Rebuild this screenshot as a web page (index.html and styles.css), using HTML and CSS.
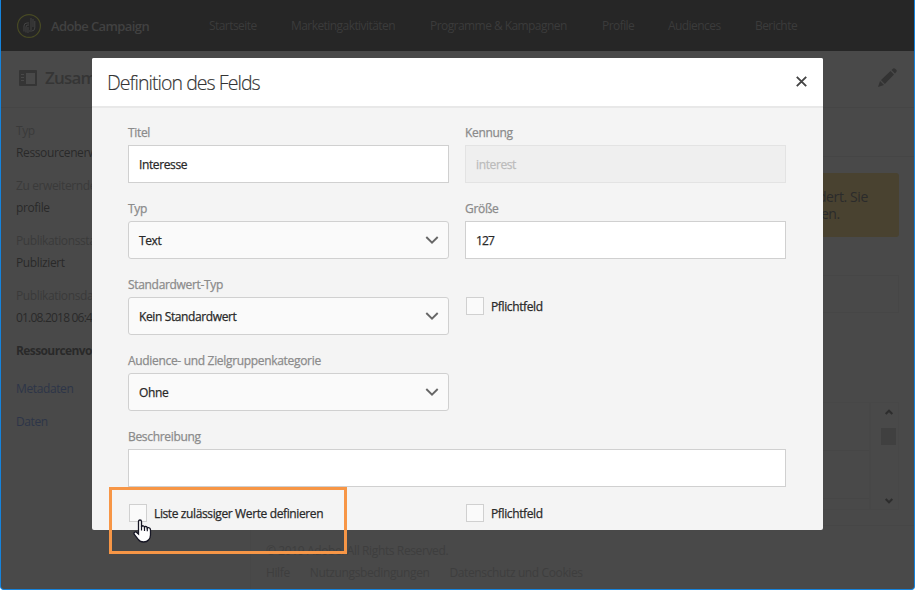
FILE: index.html
```
<!DOCTYPE html>
<html lang="de">
<head>
<meta charset="utf-8">
<title>Adobe Campaign</title>
<link rel="stylesheet" href="styles.css">
</head>
<body>
<div class="window">
  <header class="topbar">
    <svg class="logo" width="26" height="26" viewBox="0 0 26 26" fill="none">
      <circle cx="13" cy="13" r="11.4" stroke="#484a24" stroke-width="1.2"/>
      <path d="M8 18.500V13q0-3 3-3h2M10 19.500V14q0-2 2-2h1M12 20v-6M15 5v12M17 6v8M18.800 8v7q0 3-3.300 3H13" stroke="#4b4b4b" stroke-width=".8"/>
    </svg>
    <span class="brand">Adobe Campaign</span>
    <nav class="nav">
      <a class="n1">Startseite</a><a class="n2">Marketingaktivitäten</a><a class="n3">Programme &amp; Kampagnen</a><a class="n4">Profile</a><a class="n5">Audiences</a><a class="n6">Berichte</a>
    </nav>
  </header>
  <div class="titlebar">
    <svg width="18" height="16" viewBox="0 0 18 16"><path fill="#353535" fill-rule="evenodd" d="M1 0h16q1 0 1 1v14q0 1-1 1H1q-1 0-1-1V1q0-1 1-1zM7 3v11h9V3zM2 4v1h3V4zM2 7v1h3V7zM2 10v1h3v-1z"/></svg>
    <h1>Zusam</h1>
    <svg class="pencil" width="19" height="19" viewBox="0 0 19 19" fill="#333"><path d="M0 19l2-6 4 4zM3 12L12.500 3l3.500 3.500L6.800 16zM13.500 2l1.700-1.500q1-.8 2 .2l1 1q1 1 .2 2L17 5.500z"/></svg>
  </div>
  <div class="main">
    <aside class="side">
      <dl>
        <dt>Typ</dt><dd>Ressourcenerw</dd>
        <dt>Zu erweiternde</dt><dd>profile</dd>
        <dt>Publikationssta</dt><dd>Publiziert</dd>
        <dt>Publikationsda</dt><dd class="date">01.08.2018 06:4</dd>
      </dl>
      <h2>Ressourcenvo</h2>
      <a class="side-link">Metadaten</a>
      <a class="side-link">Daten</a>
    </aside>
    <section class="content">
      <div class="tabs"></div>
      <div class="notice"><p>dert. Sie<br><span class="line-end">en.</span></p></div>
      <div class="panel"></div>
      <div class="list">
        <div class="rows"><i></i><i></i><i></i></div>
        <div class="scroll">
          <svg width="8" height="6" viewBox="0 0 8 6" fill="none" stroke="#2d2d2d" stroke-width="2"><path d="M.7 5L4 1.700 7.300 5"/></svg>
          <div class="thumb"></div>
          <svg class="down" width="8" height="6" viewBox="0 0 8 6" fill="none" stroke="#2d2d2d" stroke-width="2"><path d="M.7 1L4 4.300 7.300 1"/></svg>
        </div>
      </div>
      <footer>
        <p>© 2019 Adobe. All Rights Reserved.</p>
        <p class="foot-links"><a>Hilfe</a><a>Nutzungsbedingungen</a><a>Datenschutz und Cookies</a></p>
      </footer>
    </section>
  </div>
</div>

<div class="modal">
  <div class="modal-head">
    <h2>Definition des Felds</h2>
    <svg width="11" height="11" viewBox="0 0 11 11" fill="none" stroke="#444" stroke-width="1.900"><path d="M.8.800l9.400 9.400M10.200.800L.8 10.200"/></svg>
  </div>
  <div class="form">
    <div class="field"><label>Titel</label><div class="input">Interesse</div></div>
    <div class="field"><label>Kennung</label><div class="input disabled">interest</div></div>
    <div class="field"><label>Typ</label><div class="input select">Text<svg width="14" height="8" viewBox="0 0 14 8"><path d="M1.300 1L7 6.600 12.700 1"/></svg></div></div>
    <div class="field"><label>Größe</label><div class="input number">127</div></div>
    <div class="field"><label>Standardwert-Typ</label><div class="input select">Kein Standardwert<svg width="14" height="8" viewBox="0 0 14 8"><path d="M1.300 1L7 6.600 12.700 1"/></svg></div></div>
    <div class="check first"><span class="box"></span><span>Pflichtfeld</span></div>
    <div class="field"><label>Audience- und Zielgruppenkategorie</label><div class="input select">Ohne<svg width="14" height="8" viewBox="0 0 14 8"><path d="M1.300 1L7 6.600 12.700 1"/></svg></div></div>
    <div></div>
    <div class="field wide"><label>Beschreibung</label><div class="input"></div></div>
    <div class="check"><span class="box"></span><span>Liste zulässiger Werte definieren</span></div>
    <div class="check"><span class="box"></span><span>Pflichtfeld</span></div>
  </div>
</div>
<div class="highlight"></div>
<svg class="cursor" width="19" height="24" viewBox="0 0 19 24"><path d="M5.500 13V2.700Q5.500 1 7 1t1.500 1.700V8Q9 6.600 10.200 6.800q1.200.2 1.300 1.400.5-.9 1.500-.7 1.200.2 1.300 1.500.5-.5 1.500-.3 1.700.3 1.700 2.300v5q0 3-2 5-1.500 2-4.800 2-3.700 0-5.500-2.600L1.300 15.500Q.5 14 1.700 13.200q1.200-.7 2.300.5L5.500 15z" fill="#fff" stroke="#161624" stroke-width="1.300"/><path d="M8.500 7.500v4M11.500 8v4M14.300 8.800v3.500" stroke="#161624" fill="none" stroke-width="1.200"/></svg>
</body>
</html>
```
FILE: styles.css
```
* { box-sizing: border-box; margin: 0; padding: 0; }
body {
  width: 915px; height: 590px; overflow: hidden; position: relative; background: #fff;
  font: 500 12px/16px "Open Sans", "Noto Sans", sans-serif;
  letter-spacing: -.38px; white-space: nowrap;
}
svg { display: block; flex: none; }
.window {
  width: 915px; height: 590px; display: flex; flex-direction: column; overflow: hidden;
  background: #494949; border: solid #1583dc; border-width: 0 1px 1px; border-radius: 0 0 4px 4px;
}
.topbar { height: 51px; flex: none; display: flex; align-items: center; padding-left: 15px; background: #262626; color: #414141; }
.brand { width: 158px; margin-left: 9px; font-size: 13px; font-weight: 600; letter-spacing: -.6px; }
.nav { display: flex; color: #3b3b3b; letter-spacing: -.56px; }
.n1 { width: 82px; } .n2 { width: 139px; } .n3 { width: 172px; } .n4 { width: 66px; } .n5 { width: 87px; }
.titlebar { height: 57px; flex: none; display: flex; align-items: center; padding: 0 17px 3px 18px; border-bottom: 1px solid #454545; }
.titlebar h1 { margin-left: 8px; padding-top: 1px; font-size: 17px; font-weight: 600; letter-spacing: -.8px; color: #353535; }
.pencil { margin-left: auto; }
.main { flex: 1; display: flex; }
.side { width: 249px; padding: 15px; color: #292929; }
.side dt { color: #3a3a3a; margin-bottom: 6px; }
.side dd { margin-bottom: 17px; }
.side .date { letter-spacing: -.8px; }
.side h2 { font-size: 12px; font-weight: 700; letter-spacing: -.6px; margin-bottom: 22px; }
.side-link { display: block; color: #2d3548; margin-bottom: 17px; }
.content { flex: 1; border-left: 1px solid #474747; }
.tabs { height: 49px; border-bottom: 1px solid #454545; }
.notice { height: 64px; margin: 16px 15px 0 20px; padding: 15px 31px 0 0; border-radius: 3px; background: #494230; color: #2b2b2b; text-align: right; font-size: 14px; line-height: 17px; }
.notice p { display: inline-block; text-align: left; }
.line-end { padding-left: 3px; }
.panel { height: 38px; margin: 38px 15px 0 20px; border: 1px solid #464646; }
.list { height: 108px; margin: 89px 15px 0 20px; border: 1px solid #474747; display: flex; }
.rows { flex: 1; border-right: 1px solid #474747; }
.rows i { display: block; height: 48px; border-bottom: 1px solid #464646; }
.rows i:last-child { display: none; }
.scroll { width: 28px; padding: 6px 2px 5px 10px; border-left: 1px solid #474747; display: flex; flex-direction: column; align-items: center; }
.thumb { width: 15px; height: 17px; margin-top: 13px; background: #404040; }
.scroll .down { margin-top: auto; }
footer { margin-top: 15px; padding: 17px 0 0 15px; border-top: 1px solid #464646; color: #3e3e3e; }
footer p + p { margin-top: 6px; }
.foot-links { display: flex; gap: 20px; }
.modal { position: absolute; left: 92px; top: 58px; width: 731px; height: 472px; overflow: hidden; border-radius: 2px; background: #f4f4f4; color: #292929; }
.modal-head { height: 50px; display: flex; align-items: center; justify-content: space-between; padding: 0 16px 2px 15px; background: #fff; border-bottom: 2px solid #e8e8e8; }
.modal-head h2 { padding-top: 3px; font-size: 19.500px; line-height: 26px; font-weight: 300; letter-spacing: -.95px; color: #333; -webkit-text-stroke: .15px; }
.form { display: grid; grid-template-columns: 321px 321px; column-gap: 16px; padding: 17px 36px 0; -webkit-text-stroke: .25px; }
.field { height: 76px; }
.wide { grid-column: 1 / 3; }
label { display: block; height: 20px; line-height: 16px; letter-spacing: -.32px; color: #8b8b8b; }
.input { height: 38px; display: flex; align-items: center; justify-content: space-between; padding: 1px 10px 0; background: #fff; border: 1px solid #d0d0d0; }
.disabled { background: #efefef; border-color: #e3e3e3; color: #bcbcbc; }
.number { letter-spacing: -.9px; }
.select { background: #fafafa; border-radius: 3px; padding-right: 9px; }
.select svg { margin-top: -1px; }
.select path { fill: none; stroke: #666; stroke-width: 1.900; }
.check { display: flex; align-items: center; height: 18px; padding-left: 1px; margin-top: -1px; }
.check span + span { padding-top: 1px; }
.first { margin-top: 20px; }
.box { width: 18px; height: 18px; margin-right: 7px; background: #fafafa; border: 1px solid #d0d0d0; }
.highlight { position: absolute; left: 109px; top: 487px; width: 238px; height: 67px; border: 3px solid #f79646; }
.cursor { position: absolute; left: 133px; top: 519px; }
```
